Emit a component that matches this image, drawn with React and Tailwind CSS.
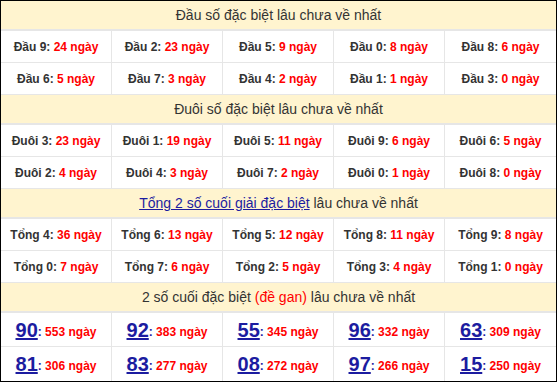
import React from "react";

const s1 = [
  [["Đầu 9", 24], ["Đầu 2", 23], ["Đầu 5", 9], ["Đầu 0", 8], ["Đầu 8", 6]],
  [["Đầu 6", 5], ["Đầu 7", 3], ["Đầu 4", 2], ["Đầu 1", 1], ["Đầu 3", 0]],
];
const s2 = [
  [["Đuôi 3", 23], ["Đuôi 1", 19], ["Đuôi 5", 11], ["Đuôi 9", 6], ["Đuôi 6", 5]],
  [["Đuôi 2", 4], ["Đuôi 4", 3], ["Đuôi 7", 2], ["Đuôi 0", 1], ["Đuôi 8", 0]],
];
const s3 = [
  [["Tổng 4", 36], ["Tổng 6", 13], ["Tổng 5", 12], ["Tổng 8", 11], ["Tổng 9", 8]],
  [["Tổng 0", 7], ["Tổng 7", 6], ["Tổng 2", 5], ["Tổng 3", 4], ["Tổng 1", 0]],
];
const s4 = [
  [["90", 553], ["92", 383], ["55", 345], ["96", 332], ["63", 309]],
  [["81", 306], ["83", 277], ["08", 272], ["97", 266], ["15", 250]],
];

function Header({ children }) {
  return (
    <div className="h-[30px] bg-[#fff4cf] border-b-2 border-[#e6e6e6] flex items-center justify-center text-[14px] text-[#333]">
      {children}
    </div>
  );
}

function Row({ items, last }) {
  return (
    <div className={"grid grid-cols-5 h-[32px] " + (last ? "" : "border-b border-[#e6e6e6]")}>
      {items.map(([l, n], i) => (
        <div
          key={i}
          className={"flex items-center justify-center text-[12px] font-bold " + (i < 4 ? "border-r border-[#e6e6e6]" : "")}
        >
          <span className="text-[#333]">{l}:&nbsp;</span>
          <span className="text-[#ff0000]">{n} ngày</span>
        </div>
      ))}
    </div>
  );
}

function BigRow({ items, last }) {
  return (
    <div className={"grid grid-cols-5 h-[34px] " + (last ? "" : "border-b border-[#e6e6e6]")}>
      {items.map(([l, n], i) => (
        <div
          key={i}
          className={"flex items-center justify-center " + (i < 4 ? "border-r border-[#e6e6e6]" : "")}
        >
          <span className="text-[20px] font-bold text-[#1c1ca0] underline leading-none">{l}</span>
          <span className="text-[12px] font-bold text-[#1c1ca0] mt-[4px]">:&nbsp;</span>
          <span className="text-[12px] font-bold text-[#ff0000] mt-[4px]">{n} ngày</span>
        </div>
      ))}
    </div>
  );
}

export default function App() {
  return (
    <div
      className="w-[557px] h-[382px] border border-black bg-white overflow-hidden"
      style={{ fontFamily: '"Liberation Sans", Arial, sans-serif' }}
    >
      <Header>Đầu số đặc biệt lâu chưa về nhất</Header>
      <Row items={s1[0]} />
      <Row items={s1[1]} />
      <Header>Đuôi số đặc biệt lâu chưa về nhất</Header>
      <Row items={s2[0]} />
      <Row items={s2[1]} />
      <Header>
        <span className="text-[#1c1ca0] underline">Tổng 2 số cuối giải đặc biệt</span>
        <span>&nbsp;lâu chưa về nhất</span>
      </Header>
      <Row items={s3[0]} />
      <Row items={s3[1]} />
      <Header>
        <span>2 số cuối đặc biệt&nbsp;</span>
        <span className="text-[#ff0000]">(đề gan)</span>
        <span>&nbsp;lâu chưa về nhất</span>
      </Header>
      <BigRow items={s4[0]} />
      <BigRow items={s4[1]} last />
    </div>
  );
}
